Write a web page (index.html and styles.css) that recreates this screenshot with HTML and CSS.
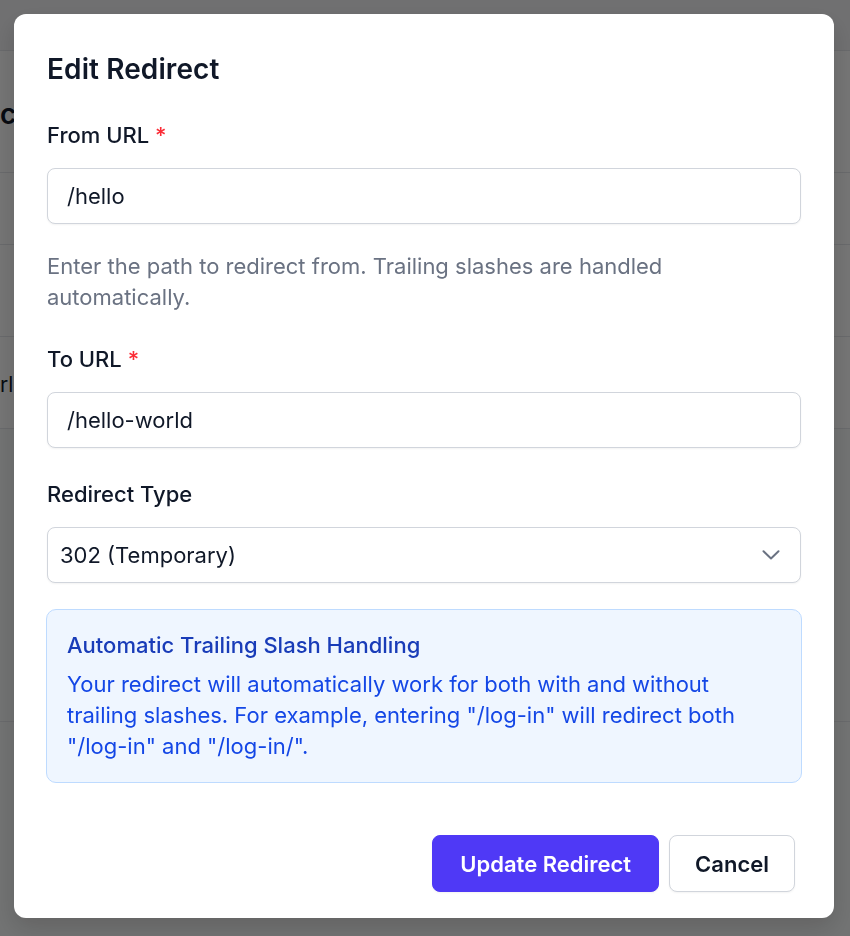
FILE: index.html
```html
<!DOCTYPE html>
<html lang="en">
<head>
<meta charset="utf-8">
<title>Edit Redirect</title>
<link rel="stylesheet" href="styles.css">
</head>
<body>
<div class="page">
  <div class="page-header"></div>
  <div class="page-title-row"><span class="page-title">c</span></div>
  <div class="page-row page-row-sm"></div>
  <div class="page-row page-row-md"></div>
  <div class="page-row page-row-md"><span class="page-cell">rl</span></div>
  <div class="page-gray"></div>
  <div class="page-gray-rest"></div>
</div>

<div class="overlay">
  <div class="modal">
    <h2 class="modal-title">Edit Redirect</h2>
    <form class="form">
      <div class="field">
        <label class="label">From URL <span class="req">*</span></label>
        <div class="input"><span class="input-text">/hello</span></div>
        <p class="help">Enter the path to redirect from. Trailing slashes are handled automatically.</p>
      </div>
      <div class="field field-next">
        <label class="label">To URL <span class="req">*</span></label>
        <div class="input"><span class="input-text">/hello-world</span></div>
      </div>
      <div class="field field-next">
        <label class="label">Redirect Type</label>
        <div class="select">
          <span class="select-text">302 (Temporary)</span>
          <svg class="chevron" width="18" height="10" viewBox="0 0 18 10" fill="none">
            <path d="M1.5 1.3 L9 8.5 L16.5 1.3" stroke="#6a7282" stroke-width="2" stroke-linecap="round" stroke-linejoin="round"/>
          </svg>
        </div>
      </div>
      <div class="info">
        <div class="info-title">Automatic Trailing Slash Handling</div>
        <p class="info-body">Your redirect will automatically work for both with and without trailing slashes. For example, entering "/log-in" will redirect both "/log-in" and "/log-in/".</p>
      </div>
      <div class="footer">
        <button type="button" class="btn btn-primary">Update Redirect</button>
        <button type="button" class="btn btn-secondary">Cancel</button>
      </div>
    </form>
  </div>
</div>
</body>
</html>
```
FILE: styles.css
```css
* { box-sizing: border-box; }

html, body {
  margin: 0;
  padding: 0;
}

body {
  font-family: Inter, "Noto Sans", "Liberation Sans", sans-serif;
  background: #f9fafb;
  color: #101828;
  width: 850px;
  height: 936px;
  overflow: hidden;
}

/* underlying page */
.page {
  display: flex;
  flex-direction: column;
}
.page-header {
  height: 51px;
  background: #f3f4f6;
  border-bottom: 1px solid #e5e7eb;
}
.page-title-row {
  height: 122px;
  background: #ffffff;
  border-bottom: 1px solid #e5e7eb;
  display: flex;
  align-items: center;
  padding-top: 4px;
}
.page-title {
  font-size: 28px;
  font-weight: 600;
  color: #101828;
  margin-left: 0;
}
.page-row {
  background: #ffffff;
  border-bottom: 1px solid #e5e7eb;
  display: flex;
  align-items: center;
}
.page-row-sm { height: 72px; }
.page-row-md { height: 92px; }
.page-cell {
  font-size: 21px;
  color: #101828;
  margin-left: 0;
  padding-top: 4px;
}
.page-gray {
  height: 293px;
  background: #f9fafb;
  border-bottom: 1px solid #e5e7eb;
}
.page-gray-rest {
  flex: 1;
  background: #f9fafb;
}

/* overlay + modal */
.overlay {
  position: fixed;
  inset: 0;
  background: rgba(0, 0, 0, 0.54);
  display: flex;
  align-items: flex-start;
  padding: 14px 0 0 14px;
}
.modal {
  width: 820px;
  background: #ffffff;
  border-radius: 12px;
  padding: 37px 33px 26px 33px;
  box-shadow: 0 10px 25px rgba(0, 0, 0, 0.15);
}
.modal-title {
  margin: 0;
  font-size: 28px;
  line-height: 36px;
  font-weight: 600;
  color: #101828;
  letter-spacing: 0.1px;
}
.form {
  margin: 33px 0 0 0;
  display: flex;
  flex-direction: column;
}
.field {
  display: flex;
  flex-direction: column;
}
.field-next { margin-top: 31px; }
.label {
  font-size: 22px;
  line-height: 30px;
  font-weight: 500;
  color: #101828;
  margin-bottom: 18px;
}
.req { color: #fb2c36; }
.input {
  height: 56px;
  border: 1px solid #d1d5dc;
  border-radius: 8px;
  background: #ffffff;
  box-shadow: 0 1px 2px rgba(0, 0, 0, 0.05);
  display: flex;
  align-items: center;
  padding: 0 19px;
}
.input-text {
  font-size: 22px;
  line-height: 30px;
  color: #101828;
}
.help {
  margin: 27px 0 0 0;
  font-size: 22px;
  line-height: 31px;
  color: #6a7282;
}
.select {
  height: 56px;
  border: 1px solid #d1d5dc;
  border-radius: 8px;
  background: #ffffff;
  box-shadow: 0 1px 2px rgba(0, 0, 0, 0.05);
  display: flex;
  align-items: center;
  justify-content: space-between;
  padding: 0 20px 0 12px;
}
.select-text {
  font-size: 22px;
  line-height: 30px;
  color: #101828;
}
.chevron { display: block; }
.info {
  margin: 26px -1px 0 -1px;
  background: #eff6ff;
  border: 1px solid #bedbff;
  border-radius: 10px;
  padding: 20px 20px 20px 20px;
}
.info-title {
  font-size: 22px;
  line-height: 30px;
  font-weight: 500;
  color: #193cb8;
}
.info-body {
  margin: 9px 0 0 0;
  font-size: 22px;
  line-height: 31px;
  color: #1447e6;
}
.footer {
  margin-top: 52px;
  display: flex;
  justify-content: flex-end;
  gap: 10px;
  padding-right: 6px;
}
.btn {
  height: 57px;
  border-radius: 8px;
  font-family: Inter, "Noto Sans", "Liberation Sans", sans-serif;
  font-size: 22px;
  font-weight: 600;
  cursor: pointer;
}
.btn-primary {
  padding: 0 27px;
  background: #4f39f6;
  color: #ffffff;
  border: 1px solid #4f39f6;
  box-shadow: 0 1px 2px rgba(0, 0, 0, 0.05);
}
.btn-secondary {
  padding: 0 25px;
  background: #ffffff;
  color: #101828;
  border: 1px solid #d1d5dc;
  box-shadow: 0 1px 2px rgba(0, 0, 0, 0.05);
}
```
